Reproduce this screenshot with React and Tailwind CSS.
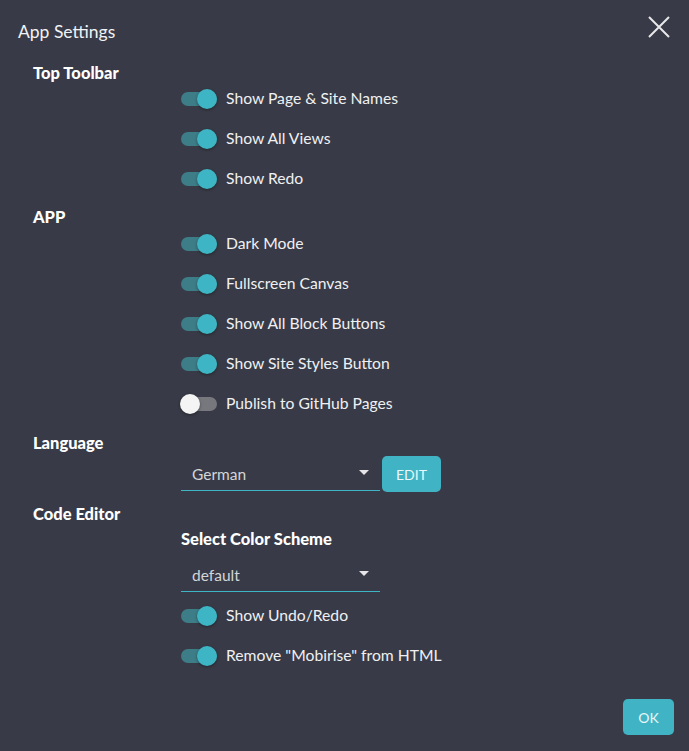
import React from "react";

function Toggle({ on, label }) {
  return (
    <div className="flex items-center h-[40px]">
      <div className="relative w-[36px] h-[14px]">
        <div className={"absolute inset-0 rounded-full " + (on ? "bg-[#3d7d88]" : "bg-[#76787d]")} />
        <div
          className={
            "absolute top-[-3px] w-[20px] h-[20px] rounded-full shadow-[0_1px_3px_rgba(0,0,0,0.4)] " +
            (on ? "left-[16px] bg-[#3eb5c4]" : "left-[-1px] bg-[#f4f4f4]")
          }
        />
      </div>
      <span className="ml-[9px] text-[15.7px] text-[#f0f0f2]">{label}</span>
    </div>
  );
}

function Heading({ children }) {
  return <div className="pl-[33px] text-[16.5px] font-black text-white h-[24px] flex items-center">{children}</div>;
}

function Select({ value }) {
  return (
    <div className="w-[199px] h-[35px] border-b border-[#3eb5c4] flex items-center justify-between pl-[11px] pr-[11px]">
      <span className="text-[15.5px] text-[#d4d5d8] mt-[4px]">{value}</span>
      <svg width="10" height="5" viewBox="0 0 10 5" className="mt-[-1px]"><path d="M0 0 L10 0 L5 5 Z" fill="#e6e6e8" /></svg>
    </div>
  );
}

export default function App() {
  return (
    <div className="w-[689px] h-[751px] bg-[#383b47] relative overflow-hidden" style={{ fontFamily: "Lato, 'Noto Sans', sans-serif" }}>
      <div className="flex items-start justify-between pl-[18px] pr-[19px] pt-[20px]">
        <div className="text-[17.5px] text-[#f2f2f4] leading-[24px]">App Settings</div>
        <svg width="22" height="22" viewBox="0 0 22 22" className="mt-[-4px]">
          <path d="M1 1 L21 21 M21 1 L1 21" stroke="#e8e8ea" strokeWidth="2" />
        </svg>
      </div>
      <div className="mt-[17px]">
        <Heading>Top Toolbar</Heading>
        <div className="pl-[181px] mt-[-6px]">
          <Toggle on label="Show Page & Site Names" />
          <Toggle on label="Show All Views" />
          <Toggle on label="Show Redo" />
        </div>
        <div className="mt-[6px]"><Heading>APP</Heading></div>
        <div className="pl-[181px] mt-[-5px]">
          <Toggle on label="Dark Mode" />
          <Toggle on label="Fullscreen Canvas" />
          <Toggle on label="Show All Block Buttons" />
          <Toggle on label="Show Site Styles Button" />
          <Toggle label="Publish to GitHub Pages" />
        </div>
        <div className="mt-[7px]"><Heading>Language</Heading></div>
        <div className="pl-[181px] mt-[1px] flex items-start">
          <Select value="German" />
          <button className="ml-[2px] w-[59px] h-[36px] rounded-[5px] bg-[#40b4c4] text-[#e8f7f9] text-[14px]">EDIT</button>
        </div>
        <div className="mt-[10px]"><Heading>Code Editor</Heading></div>
        <div className="pl-[181px] mt-[1px]">
          <div className="text-[16.5px] font-black text-white h-[24px] flex items-center">Select Color Scheme</div>
          <div className="mt-[6px]"><Select value="default" /></div>
          <div className="mt-[4px]">
            <Toggle on label="Show Undo/Redo" />
            <Toggle on label={'Remove "Mobirise" from HTML'} />
          </div>
        </div>
      </div>
      <button className="absolute left-[623px] top-[699px] w-[51px] h-[36px] rounded-[5px] bg-[#40b4c4] text-[#e8f7f9] text-[14px]">OK</button>
    </div>
  );
}
